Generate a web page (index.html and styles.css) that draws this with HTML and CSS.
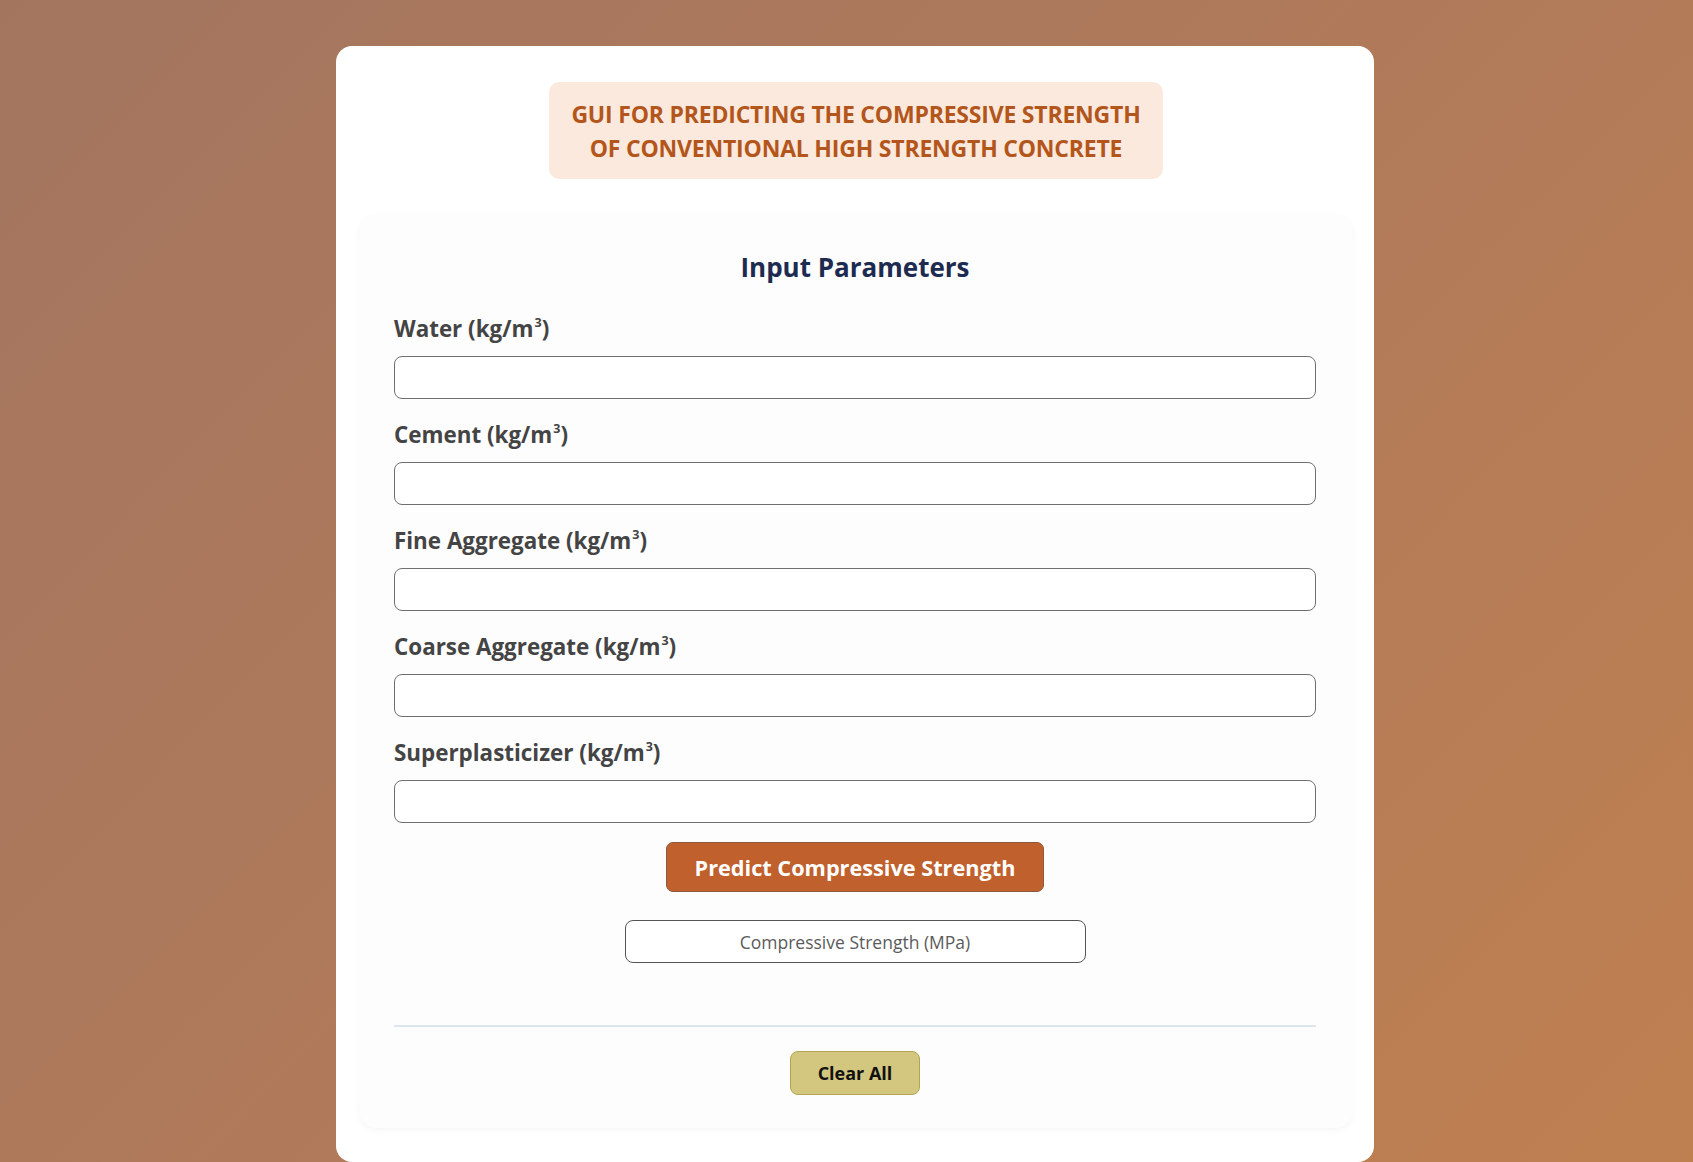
FILE: index.html
```html
<!DOCTYPE html>
<html lang="en">
<head>
<meta charset="utf-8">
<title>Compressive Strength Predictor</title>
<link rel="stylesheet" href="styles.css">
</head>
<body>
<main class="card">
  <header class="title-box">
    <h1 class="title">GUI FOR PREDICTING THE COMPRESSIVE STRENGTH<br>OF CONVENTIONAL HIGH STRENGTH CONCRETE</h1>
  </header>
  <section class="panel">
    <h2 class="panel-heading">Input Parameters</h2>
    <div class="field">
      <label class="label">Water (kg/m<sup>3</sup>)</label>
      <input class="input" type="text">
    </div>
    <div class="field">
      <label class="label">Cement (kg/m<sup>3</sup>)</label>
      <input class="input" type="text">
    </div>
    <div class="field">
      <label class="label">Fine Aggregate (kg/m<sup>3</sup>)</label>
      <input class="input" type="text">
    </div>
    <div class="field">
      <label class="label">Coarse Aggregate (kg/m<sup>3</sup>)</label>
      <input class="input" type="text">
    </div>
    <div class="field">
      <label class="label">Superplasticizer (kg/m<sup>3</sup>)</label>
      <input class="input" type="text">
    </div>
    <div class="actions">
      <button class="btn-predict">Predict Compressive Strength</button>
      <div class="output">Compressive Strength (MPa)</div>
    </div>
    <hr class="divider">
    <div class="clear-row">
      <button class="btn-clear">Clear All</button>
    </div>
  </section>
</main>
</body>
</html>
```
FILE: styles.css
```css
* { box-sizing: border-box; }
html, body { height: 100%; }
body {
  margin: 0;
  background: linear-gradient(135deg, #a3755f 0%, #b07a5a 50%, #bf8050 100%);
  font-family: "Open Sans", "Noto Sans", sans-serif;
  overflow: hidden;
}
.card {
  width: 1038px;
  margin: 46px 0 0 336px;
  background: #ffffff;
  border-radius: 16px;
  padding: 36px 22px 34px 24px;
}
.title-box {
  width: 614px;
  margin: 0 auto;
  background: #fce9dd;
  border-radius: 10px;
  padding: 15px 0 14px;
  text-align: center;
}
.title {
  margin: 0;
  font-size: 23px;
  line-height: 34px;
  font-weight: 700;
  color: #b3561c;
  letter-spacing: -0.2px;
}
.panel {
  margin-top: 36px;
  background: #fdfdfd;
  border-radius: 16px;
  box-shadow: 0 2px 8px rgba(0,0,0,0.04);
  padding: 34px 36px 33px 34px;
}
.panel-heading {
  margin: 0 0 29px;
  text-align: center;
  font-size: 26px;
  line-height: 36px;
  font-weight: 700;
  color: #1d2b50;
}
.field {
  display: flex;
  flex-direction: column;
  margin-bottom: 21px;
}
.label {
  font-size: 22.4px;
  line-height: 30px;
  font-weight: 700;
  color: #444444;
  margin-bottom: 12px;
}
.label sup {
  font-size: 12.5px;
  line-height: 0;
  vertical-align: 10px;
  margin-left: 1px;
}
.input {
  height: 43px;
  width: 100%;
  border: 1.5px solid #6f6f6f;
  border-radius: 8px;
  background: #ffffff;
  font-family: inherit;
  font-size: 17px;
  padding: 0 12px;
}
.actions {
  display: flex;
  flex-direction: column;
  align-items: center;
  gap: 28px;
  margin-top: -2px;
}
.btn-predict {
  width: 378px;
  height: 50px;
  background: #c0602c;
  border: 1.5px solid #8e5a3e;
  border-radius: 7px;
  color: #ffffff;
  font-family: inherit;
  font-weight: 700;
  font-size: 21.7px;
}
.output {
  width: 461px;
  height: 43px;
  border: 1.5px solid #555555;
  border-radius: 8px;
  background: #ffffff;
  display: flex;
  align-items: center;
  justify-content: center;
  color: #5b5b5b;
  font-size: 17.5px;
}
.divider {
  margin: 62px 0 0;
  border: 0;
  height: 2px;
  background: #dfe5ec;
}
.clear-row {
  display: flex;
  justify-content: center;
  margin-top: 24px;
}
.btn-clear {
  width: 130px;
  height: 44px;
  background: #d3c77f;
  border: 1.5px solid #b3a553;
  border-radius: 8px;
  color: #111111;
  font-family: inherit;
  font-weight: 700;
  font-size: 18px;
}
```
